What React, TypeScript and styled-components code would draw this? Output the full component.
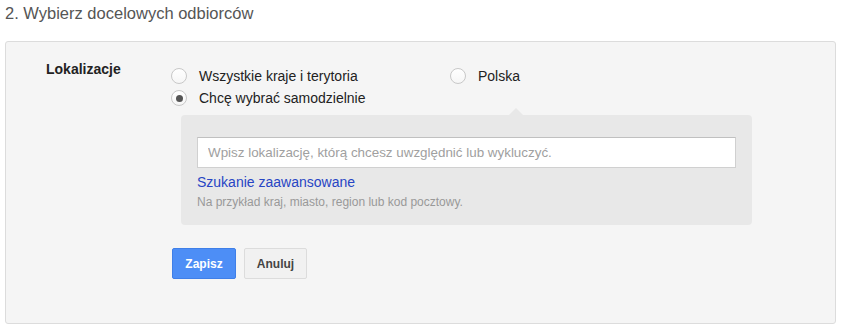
import React from "react";
import styled, { createGlobalStyle } from "styled-components";

const Global = createGlobalStyle`
  html, body { margin: 0; padding: 0; background: #ffffff; }
  body { font-family: "Liberation Sans", Arial, sans-serif; }
  * { box-sizing: border-box; }
`;

const Page = styled.div`
  padding: 3px 9px 0 5px;
  width: 845px;
`;

const Title = styled.h2`
  margin: 0;
  font-weight: normal;
  font-size: 16.5px;
  line-height: 20px;
  color: #555555;
`;

const Panel = styled.section`
  margin-top: 18px;
  width: 831px;
  height: 283px;
  background: #f5f5f5;
  border: 1px solid #dcdcdc;
  border-radius: 3px;
  padding: 16px 0 0 40px;
  display: grid;
  grid-template-columns: 125px 1fr;
`;

const Label = styled.div`
  font-size: 14px;
  font-weight: bold;
  line-height: 17px;
  color: #222222;
  padding-top: 3px;
`;

const Content = styled.div`
  display: flex;
  flex-direction: column;
  padding-top: 7px;
`;

const OptionsGrid = styled.div`
  display: grid;
  grid-template-columns: 279px 1fr;
  grid-auto-rows: 22px;
`;

const Option = styled.label`
  display: flex;
  align-items: center;
  gap: 12px;
  font-size: 14px;
  line-height: 22px;
  color: #222222;
  cursor: pointer;
`;

const Radio = styled.span<{ $checked?: boolean }>`
  position: relative;
  width: 16px;
  height: 16px;
  border-radius: 50%;
  border: 1px solid #c8c8c8;
  background: linear-gradient(#ffffff, #f6f6f6);
  flex: none;
  &::after {
    content: "";
    display: ${(p) => (p.$checked ? "block" : "none")};
    position: absolute;
    left: 3.5px;
    top: 3.5px;
    width: 7px;
    height: 7px;
    border-radius: 50%;
    background: #555555;
  }
`;

const SearchBox = styled.div`
  position: relative;
  margin: 6px 0 0 10px;
  width: 571px;
  height: 110px;
  background: #e8e8e8;
  border-radius: 4px;
  padding: 22px 16px 0 16px;
  &::before {
    content: "";
    position: absolute;
    top: -7px;
    left: 328px;
    border-left: 7px solid transparent;
    border-right: 7px solid transparent;
    border-bottom: 7px solid #e8e8e8;
  }
`;

const Input = styled.input`
  display: block;
  width: 539px;
  height: 31px;
  border: 1px solid #d0d0d0;
  border-top-color: #c0c0c0;
  background: #ffffff;
  padding: 0 10px;
  font-family: "Liberation Sans", Arial, sans-serif;
  font-size: 13.4px;
  color: #333;
  outline: none;
  &::placeholder { color: #a0a0a0; }
`;

const Link = styled.a`
  display: block;
  margin-top: 5px;
  font-size: 14px;
  line-height: 18px;
  color: #2745c4;
  text-decoration: none;
`;

const Hint = styled.div`
  margin-top: 5px;
  font-size: 12px;
  line-height: 13px;
  color: #999999;
`;

const Buttons = styled.div`
  display: flex;
  gap: 8px;
  margin: 23px 0 0 1px;
`;

const Button = styled.button<{ $primary?: boolean }>`
  height: 31px;
  padding: 0 10px;
  border-radius: 2px;
  font-family: "Liberation Sans", Arial, sans-serif;
  font-size: 12px;
  font-weight: bold;
  cursor: pointer;
  color: ${(p) => (p.$primary ? "#ffffff" : "#444444")};
  background: ${(p) => (p.$primary ? "#4d8ef6" : "#f1f1f1")};
  border: 1px solid ${(p) => (p.$primary ? "#3f7fe8" : "#dcdcdc")};
  width: ${(p) => (p.$primary ? "64px" : "63px")};
`;

export default function App() {
  return (
    <>
      <Global />
      <Page>
        <Title>2. Wybierz docelowych odbiorców</Title>
        <Panel>
          <Label>Lokalizacje</Label>
          <Content>
            <OptionsGrid>
              <Option>
                <Radio />
                Wszystkie kraje i terytoria
              </Option>
              <Option>
                <Radio />
                Polska
              </Option>
              <Option>
                <Radio $checked />
                Chcę wybrać samodzielnie
              </Option>
            </OptionsGrid>
            <SearchBox>
              <Input placeholder="Wpisz lokalizację, którą chcesz uwzględnić lub wykluczyć." />
              <Link href="#">Szukanie zaawansowane</Link>
              <Hint>Na przykład kraj, miasto, region lub kod pocztowy.</Hint>
            </SearchBox>
            <Buttons>
              <Button $primary>Zapisz</Button>
              <Button>Anuluj</Button>
            </Buttons>
          </Content>
        </Panel>
      </Page>
    </>
  );
}
